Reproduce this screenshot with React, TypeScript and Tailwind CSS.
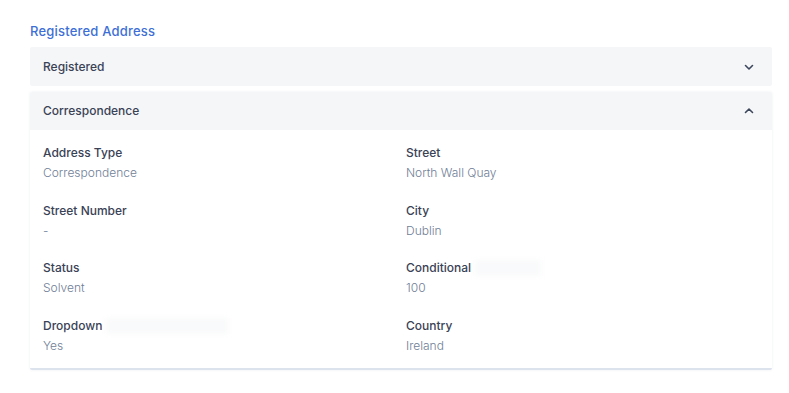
import React from 'react';

const fields = [
    { label: 'Address Type', value: 'Correspondence' },
    { label: 'Street', value: 'North Wall Quay' },
    { label: 'Street Number', value: '-' },
    { label: 'City', value: 'Dublin' },
    { label: 'Status', value: 'Solvent' },
    { label: 'Conditional', value: '100', redact: 'w-[66px]' },
    { label: 'Dropdown', value: 'Yes', redact: 'w-[122px]' },
    { label: 'Country', value: 'Ireland' },
];

const Chevron = ({ up }: { up?: boolean }) => (
    <svg
        width="10"
        height="10"
        viewBox="0 0 10 10"
        fill="none"
        className={up ? 'rotate-180' : ''}
    >
        <path
            d="M1.5 3.5 5 7l3.5-3.5"
            stroke="#3d475c"
            strokeWidth="1.6"
            strokeLinecap="round"
            strokeLinejoin="round"
        />
    </svg>
);

const App = () => {
    return (
        <div className="min-h-[393px] w-full bg-white px-[30px] pt-[22px] font-['Inter',sans-serif] text-[#3a4256]">
            <h2 className="text-[13px] leading-[18px] font-medium tracking-[0.2px] text-[#3e6fd6]">
                Registered Address
            </h2>
            <div className="mt-[7px] w-[742px]">
                <div className="flex h-[39px] items-center justify-between rounded-[2px] bg-[#f5f6f8] pr-[18px] pl-[13px]">
                    <span className="text-[12px] font-medium">Registered</span>
                    <Chevron />
                </div>
                <div className="mt-[6px] overflow-hidden rounded-[2px] border-b-2 border-[#dde3ec] bg-white shadow-[0_0_3px_rgba(30,50,90,0.08)]">
                    <div className="flex h-[38px] items-center justify-between bg-[#f5f6f8] pr-[18px] pl-[13px]">
                        <span className="text-[12px] font-medium">Correspondence</span>
                        <Chevron up />
                    </div>
                    <div className="grid grid-cols-2 gap-x-[10px] gap-y-[18.6px] px-[13px] pt-[13px] pb-[13px]">
                        {fields.map((f) => (
                            <div key={f.label}>
                                <div className="flex items-center text-[12px] leading-[20px] font-medium">
                                    {f.label}
                                    {f.redact && (
                                        <span
                                            className={`ml-1 h-[16px] ${f.redact} bg-gray-50 blur-[2px]`}
                                        />
                                    )}
                                </div>
                                <div className="text-[12px] leading-[19px] font-light text-[#6f7e96]">
                                    {f.value}
                                </div>
                            </div>
                        ))}
                    </div>
                </div>
            </div>
        </div>
    );
};

export default App;
